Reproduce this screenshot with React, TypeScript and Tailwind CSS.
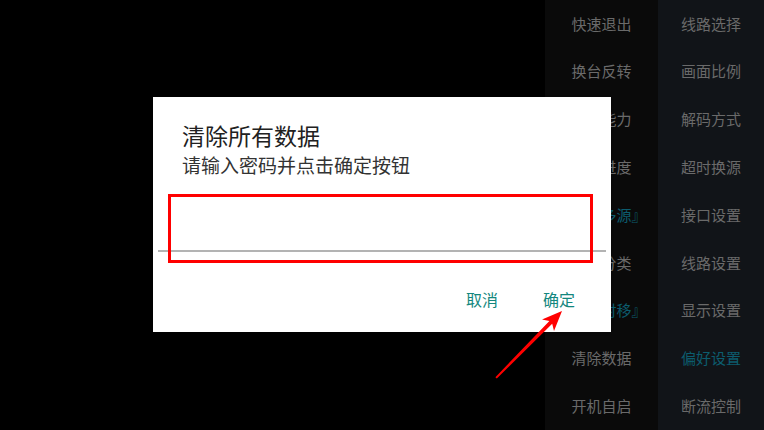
import React from 'react';

type MenuItem = { label: string; active?: boolean };

const leftColumn: MenuItem[] = [
  { label: '快速退出' },
  { label: '换台反转' },
  { label: '换源能力' },
  { label: '显示进度' },
  { label: '『智能多源』', active: true },
  { label: '频道分类' },
  { label: '『开启时移』', active: true },
  { label: '清除数据' },
  { label: '开机自启' },
];

const rightColumn: MenuItem[] = [
  { label: '线路选择' },
  { label: '画面比例' },
  { label: '解码方式' },
  { label: '超时换源' },
  { label: '接口设置' },
  { label: '线路设置' },
  { label: '显示设置' },
  { label: '偏好设置', active: true },
  { label: '断流控制' },
];

function MenuColumn({ items, className }: { items: MenuItem[]; className: string }) {
  return (
    <div className={`flex flex-col ${className}`}>
      {items.map((item) => (
        <div
          key={item.label}
          className={`h-[48px] flex items-center justify-center whitespace-nowrap text-[15px] ${
            item.active ? 'text-[#0c5c6e]' : 'text-[#6a6a6a]'
          }`}
        >
          {item.label}
        </div>
      ))}
    </div>
  );
}

export default function App() {
  return (
    <div
      className="relative w-[764px] h-[430px] overflow-hidden bg-black flex"
      style={{ fontFamily: '"Noto Sans CJK SC", "Noto Sans", sans-serif' }}
    >
      <div className="flex-1" />
      <MenuColumn items={leftColumn} className="w-[113px] bg-[#0a0a0a]" />
      <MenuColumn items={rightColumn} className="w-[106px] bg-[#111418]" />

      {/* dialog */}
      <div className="absolute left-[153px] top-[97px] w-[458px] h-[235px] bg-white shadow-sm flex flex-col">
        <div className="pl-[29px] pt-[24px] text-[23px] leading-[28px] text-[#212121]">清除所有数据</div>
        <div className="pl-[29px] pt-[4px] text-[19px] leading-[24px] text-[#333333]">请输入密码并点击确定按钮</div>
        <div className="mx-[5px] mt-[73px] h-[2px] bg-[#b3b3b3]" />
        <div className="flex justify-end pr-[36px] gap-[45px] mt-[37px] text-[16px] leading-[20px] text-[#13877e]">
          <span>取消</span>
          <span>确定</span>
        </div>
      </div>

      {/* annotation */}
      <div className="absolute left-[168px] top-[194px] w-[425px] h-[69px] border-[3px] border-[#ff0000]" />
      <svg className="absolute inset-0 pointer-events-none" width="764" height="430" viewBox="0 0 764 430">
        <polygon
          points="562,311 554,331 552.2,323.8 496.8,378.6 495.4,377.2 549.4,320.9 542,319.5"
          fill="#ff0000"
        />
      </svg>
    </div>
  );
}
